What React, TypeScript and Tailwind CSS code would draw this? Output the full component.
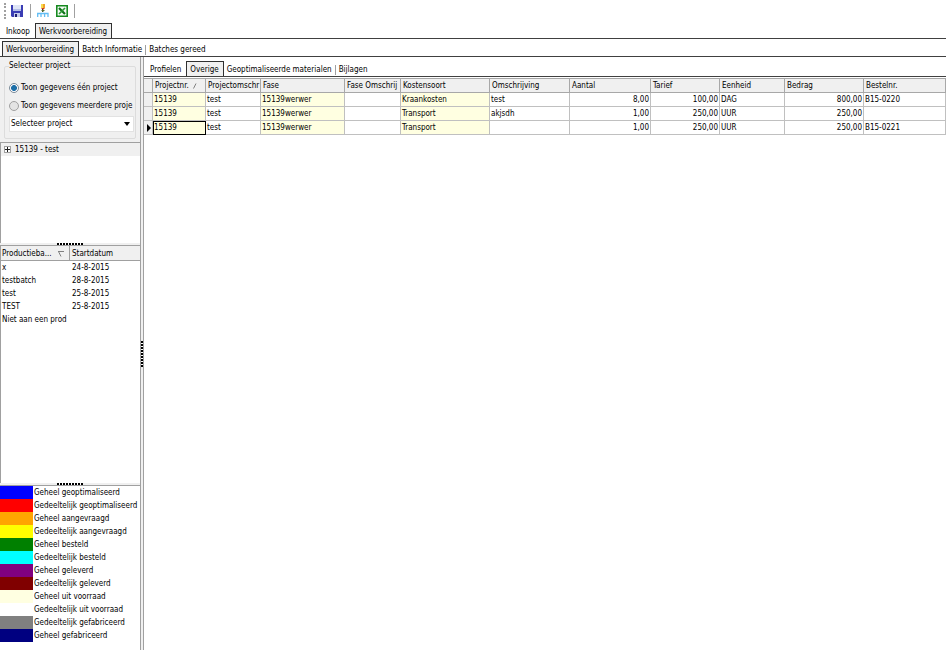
import { useState } from 'react';
import type { ReactNode } from 'react';
import clsx from 'clsx';

interface CostRow {
  project: string;
  projectDesc: string;
  phase: string;
  phaseDesc: string;
  kind: string;
  desc: string;
  amount: string;
  rate: string;
  unit: string;
  total: string;
  order: string;
}

const rows: CostRow[] = [
  { project: '15139', projectDesc: 'test', phase: '15139werwer', phaseDesc: '', kind: 'Kraankosten', desc: 'test', amount: '8,00', rate: '100,00', unit: 'DAG', total: '800,00', order: 'B15-0220' },
  { project: '15139', projectDesc: 'test', phase: '15139werwer', phaseDesc: '', kind: 'Transport', desc: 'akjsdh', amount: '1,00', rate: '250,00', unit: 'UUR', total: '250,00', order: '' },
  { project: '15139', projectDesc: 'test', phase: '15139werwer', phaseDesc: '', kind: 'Transport', desc: '', amount: '1,00', rate: '250,00', unit: 'UUR', total: '250,00', order: 'B15-0221' },
];

const columns: { key: keyof CostRow; label: string; width: string; yellow?: boolean; right?: boolean }[] = [
  { key: 'project', label: 'Projectnr.', width: 'w-[53px]', yellow: true },
  { key: 'projectDesc', label: 'Projectomschr', width: 'w-[55px]' },
  { key: 'phase', label: 'Fase', width: 'w-[84px]', yellow: true },
  { key: 'phaseDesc', label: 'Fase Omschrij', width: 'w-[56px]' },
  { key: 'kind', label: 'Kostensoort', width: 'w-[89px]', yellow: true },
  { key: 'desc', label: 'Omschrijving', width: 'w-[80px]' },
  { key: 'amount', label: 'Aantal', width: 'w-[81px]', right: true },
  { key: 'rate', label: 'Tarief', width: 'w-[69px]', right: true },
  { key: 'unit', label: 'Eenheid', width: 'w-[65px]' },
  { key: 'total', label: 'Bedrag', width: 'w-[79px]', right: true },
  { key: 'order', label: 'Bestelnr.', width: 'w-auto' },
];

const batches = [
  { name: 'x', start: '24-8-2015' },
  { name: 'testbatch', start: '28-8-2015' },
  { name: 'test', start: '25-8-2015' },
  { name: 'TEST', start: '25-8-2015' },
  { name: 'Niet aan een prod', start: '' },
];

const legend = [
  { color: 'bg-[#0000ff]', label: 'Geheel geoptimaliseerd' },
  { color: 'bg-[#ff0000]', label: 'Gedeeltelijk geoptimaliseerd' },
  { color: 'bg-[#ffa500]', label: 'Geheel aangevraagd' },
  { color: 'bg-[#ffff00]', label: 'Gedeeltelijk aangevraagd' },
  { color: 'bg-[#008000]', label: 'Geheel besteld' },
  { color: 'bg-[#00ffff]', label: 'Gedeeltelijk besteld' },
  { color: 'bg-[#800080]', label: 'Geheel geleverd' },
  { color: 'bg-[#800000]', label: 'Gedeeltelijk geleverd' },
  { color: 'bg-[#ffffe1]', label: 'Geheel uit voorraad' },
  { color: 'bg-white', label: 'Gedeeltelijk uit voorraad' },
  { color: 'bg-[#808080]', label: 'Gedeeltelijk gefabriceerd' },
  { color: 'bg-[#000080]', label: 'Geheel gefabriceerd' },
];

function SaveIcon() {
  return (
    <svg width="12" height="12" viewBox="0 0 12 12" aria-hidden="true">
      <path d="M0 0h12v12H1l-1-1z" fill="#3a3db4" />
      <path d="M2 0h8v6H2z" fill="#dfe5f6" />
      <path d="M2 4h8v2H2z" fill="#b4bfe6" />
      <path d="M3 8h6v4H3z" fill="#c4caea" />
      <path d="M4 9h2v3H4z" fill="#1c1e70" />
    </svg>
  );
}

function OptimiseIcon() {
  return (
    <svg width="12" height="13" viewBox="0 0 12 13" aria-hidden="true">
      <path d="M4 0h4v4H4z" fill="#f0a428" />
      <path d="M4 0h2v4H4z" fill="#f8dc50" />
      <path d="M4 4h4L6 6z" fill="#d03c20" />
      <path d="M5 5h1v3H5z" fill="#404028" />
      <path d="M4 6h4L6 8z" fill="#587038" />
      <path d="M.7 13V9.500h3.300V13M4 9.500h3.600V13M7.600 9.500H11V13" fill="none" stroke="#62bdf4" strokeWidth="1.3" />
    </svg>
  );
}

function ExcelIcon() {
  return (
    <svg width="12" height="12" viewBox="0 0 12 12" aria-hidden="true">
      <path d="M.8 .8h10.400v10.400H.8z" fill="#f4fbf4" stroke="#178a20" strokeWidth="1.6" />
      <path d="M3 3l6 6" stroke="#0c7016" strokeWidth="2.2" />
      <path d="M9 3L3 9" stroke="#2c9a34" strokeWidth="1.6" />
    </svg>
  );
}

function ToolButton({ label, children }: { label: string; children: ReactNode }) {
  return (
    <button type="button" aria-label={label} className="flex h-4 w-4 items-center justify-center">
      {children}
    </button>
  );
}

interface TabsProps {
  items: string[];
  initial: string;
  className?: string;
}

function Tabs({ items, initial, className }: TabsProps) {
  const [active, setActive] = useState(initial);
  const activeIndex = items.indexOf(active);

  return (
    <div role="tablist" className={clsx('flex items-end border-b border-[#404040]', className)}>
      {items.map((item, i) => (
        <button
          key={item}
          type="button"
          role="tab"
          aria-selected={item === active}
          onClick={() => setActive(item)}
          className={clsx(
            'flex h-[15px] items-center pt-[2px] whitespace-nowrap',
            item === active && 'border-x border-t border-[#303030] bg-[#f0f0f0] pr-px',
            item === active && i > 0 && 'ml-[2px]',
          )}
        >
          <span
            className={clsx(
              'px-[3px] leading-[10px]',
              i > activeIndex && i < items.length - 1 && 'border-r border-[#a0a0a0]',
            )}
          >
            {item}
          </span>
        </button>
      ))}
    </div>
  );
}

function Grip({ vertical }: { vertical?: boolean }) {
  return (
    <div
      className={clsx(
        vertical
          ? 'h-[26px] w-[2px] bg-[repeating-linear-gradient(to_bottom,#000_0_2px,#fff_2px_3px)]'
          : 'h-[2px] w-[26px] bg-[repeating-linear-gradient(to_right,#000_0_2px,#fff_2px_3px)]',
      )}
    />
  );
}

function HorizontalSplitter() {
  return (
    <div className="flex h-[3px] shrink-0 justify-center border-b border-[#a0a0a0] bg-[#f0f0f0]">
      <Grip />
    </div>
  );
}

function ProjectSelector() {
  return (
    <div className="h-[85px] shrink-0 overflow-hidden bg-[#f0f0f0] px-1 pt-[2px]">
      <fieldset className="h-20 min-w-0 rounded-xs border border-[#dcdcdc] pl-1">
        <legend className="leading-[14px]">Selecteer project</legend>
        <label className="mt-[6px] flex h-[18px] items-center gap-[2px] overflow-hidden whitespace-nowrap">
          <input type="radio" name="mode" defaultChecked className="m-0 h-[10px] w-[10px] shrink-0 appearance-none rounded-full border border-[#7a8a98] bg-white bg-radial from-[#1d6fa8] from-45% to-white to-60%" />
          Toon gegevens één project
        </label>
        <label className="flex h-[18px] items-center gap-[2px] overflow-hidden whitespace-nowrap">
          <input type="radio" name="mode" className="m-0 h-[10px] w-[10px] shrink-0 appearance-none rounded-full border border-[#a0a0a0] bg-[#e4e4e4]" />
          Toon gegevens meerdere proje
        </label>
        <div className="relative mt-px mr-px flex h-4 items-center bg-white">
          <select aria-label="Selecteer project" className="h-4 w-full appearance-none border border-[#e2e2e2] bg-white px-px">
            <option>Selecteer project</option>
          </select>
          <span className="pointer-events-none absolute right-1 border-x-3 border-t-4 border-x-transparent border-t-black" />
        </div>
      </fieldset>
    </div>
  );
}

function ProjectTree() {
  return (
    <div className="h-[101px] shrink-0 border-t border-l border-[#a0a0a0] bg-white">
      <div className="flex h-[13px] items-center gap-1 bg-[#f0f0f0] px-[3px]">
        <button type="button" aria-label="Uitklappen" className="flex h-[7px] w-[7px] items-center justify-center border border-[#a0a0a0] bg-white">
          <svg width="5" height="5" viewBox="0 0 5 5" aria-hidden="true">
            <path d="M0 2.500h5M2.500 0v5" stroke="#202020" />
          </svg>
        </button>
        15139 - test
      </div>
    </div>
  );
}

function BatchList() {
  return (
    <div className="h-[237px] shrink-0 overflow-hidden border-l border-[#a0a0a0] bg-white">
      <table className="w-full table-fixed border-separate border-spacing-0">
        <thead>
          <tr className="h-[15px] bg-[#f0f0f0]">
            <th className="w-[69px] border-r border-b border-[#a0a0a0] px-px pt-px pb-0 text-left font-normal">
              <div className="flex items-center justify-between pr-1">
                Productieba...
                <svg width="6" height="6" viewBox="0 0 6 6" aria-hidden="true">
                  <path d="M0 .5h6M.5 .5L3 5.500" fill="none" stroke="#808080" />
                </svg>
              </div>
            </th>
            <th className="border-b border-[#a0a0a0] px-[2px] pt-px pb-0 text-left font-normal">Startdatum</th>
          </tr>
        </thead>
        <tbody>
          {batches.map((batch) => (
            <tr key={batch.name} className="h-[13px]">
              <td className="px-px py-0 whitespace-nowrap">{batch.name}</td>
              <td className="px-[2px] py-0">{batch.start}</td>
            </tr>
          ))}
        </tbody>
      </table>
    </div>
  );
}

function Legend() {
  return (
    <ul className="grow bg-white">
      {legend.map((entry) => (
        <li key={entry.label} className="flex h-[13px] items-center gap-px whitespace-nowrap">
          <span className={clsx('h-[13px] w-[33px] shrink-0', entry.color)} />
          {entry.label}
        </li>
      ))}
    </ul>
  );
}

function CostGrid() {
  const [current, setCurrent] = useState(2);

  return (
    <table className="w-full table-fixed border-separate border-spacing-0">
      <thead>
        <tr className="h-[15px] bg-[#f0f0f0]">
          <th className="w-[9px] border-t border-r border-b border-[#a8a8a8]" />
          {columns.map((col) => (
            <th key={col.key} className={clsx('overflow-hidden border-t border-r border-b border-[#a8a8a8] px-[2px] pt-px pb-0 text-left font-normal whitespace-nowrap', col.width)}>
              {col.label}
              {col.key === 'project' && (
                <svg width="6" height="6" viewBox="0 0 6 6" className="ml-1 inline" aria-hidden="true">
                  <path d="M.5 5.500L3 .5" stroke="#808080" />
                </svg>
              )}
            </th>
          ))}
        </tr>
      </thead>
      <tbody>
        {rows.map((row, i) => (
          <tr key={i} className="h-[14px]" onClick={() => setCurrent(i)}>
            <td className="border-r border-b border-[#c0c0c0] bg-[#f0f0f0] p-0">
              {i === current && <div className="ml-[3px] w-0 border-y-4 border-l-4 border-y-transparent border-l-black" />}
            </td>
            {columns.map((col) => (
              <td
                key={col.key}
                className={clsx(
                  'overflow-hidden border-r border-b border-[#c0c0c0] px-px py-0 whitespace-nowrap',
                  col.yellow && 'bg-[#ffffe1]',
                  col.right && 'text-right',
                  i === current && col.key === 'project' && 'outline outline-black -outline-offset-1',
                )}
              >
                {row[col.key]}
              </td>
            ))}
          </tr>
        ))}
      </tbody>
    </table>
  );
}

export default function App() {
  return (
    <div className="flex min-h-screen flex-col bg-white font-['DejaVu_Sans_Condensed','Noto_Sans',sans-serif] text-[8px] leading-3 text-black">
      <div role="toolbar" className="flex h-[21px] items-center pl-1">
        <span className="h-4 border-l-2 border-dotted border-[#a0a0a0]" />
        <div className="ml-[3px] flex items-center">
          <ToolButton label="Opslaan"><SaveIcon /></ToolButton>
          <span className="mr-1 ml-[5px] h-[14px] w-px bg-[#a0a0a0]" />
          <ToolButton label="Optimaliseren"><OptimiseIcon /></ToolButton>
          <span className="w-[3px]" />
          <ToolButton label="Exporteren naar Excel"><ExcelIcon /></ToolButton>
          <span className="ml-1 h-[14px] w-px bg-[#a0a0a0]" />
        </div>
      </div>
      <Tabs items={['Inkoop', 'Werkvoorbereiding']} initial="Werkvoorbereiding" className="h-[18px] pl-[3px]" />
      <Tabs items={['Werkvoorbereiding', 'Batch Informatie', 'Batches gereed']} initial="Werkvoorbereiding" className="h-[18px] pl-[2px]" />
      <div className="flex grow">
        <aside className="flex w-[140px] shrink-0 flex-col">
          <ProjectSelector />
          <ProjectTree />
          <HorizontalSplitter />
          <BatchList />
          <HorizontalSplitter />
          <Legend />
        </aside>
        <div className="flex w-1 shrink-0 items-center border-x border-[#a0a0a0] bg-[#f0f0f0]">
          <Grip vertical />
        </div>
        <main className="min-w-0 grow overflow-hidden">
          <Tabs items={['Profielen', 'Overige', 'Geoptimaliseerde materialen', 'Bijlagen']} initial="Overige" className="h-5 pl-[3px]" />
          <div className="pt-px">
            <CostGrid />
          </div>
        </main>
      </div>
    </div>
  );
}
